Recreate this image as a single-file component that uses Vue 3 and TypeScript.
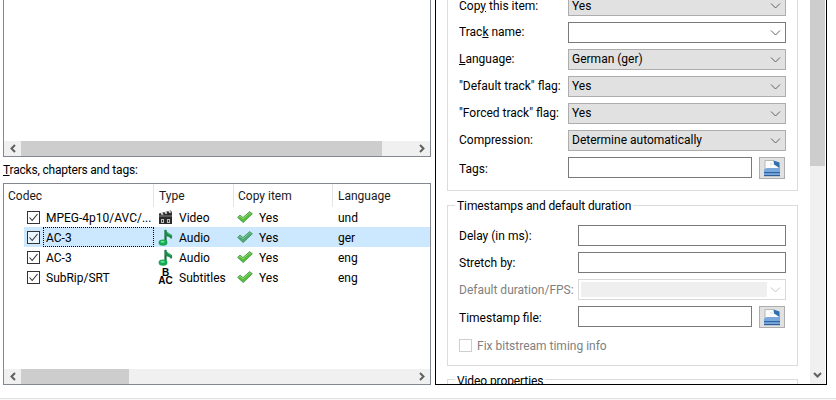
<script setup lang="ts">
interface Track {
  codec: string
  type: string
  icon: 'video' | 'audio' | 'subs'
  lang: string
  selected?: boolean
}

const tracks: Track[] = [
  { codec: 'MPEG-4p10/AVC/...', type: 'Video', icon: 'video', lang: 'und' },
  { codec: 'AC-3', type: 'Audio', icon: 'audio', lang: 'ger', selected: true },
  { codec: 'AC-3', type: 'Audio', icon: 'audio', lang: 'eng' },
  { codec: 'SubRip/SRT', type: 'Subtitles', icon: 'subs', lang: 'eng' },
]
</script>

<template>
  <div class="root">
    <div class="main">
      <div class="left">
        <div class="list list-top">
          <div class="list-fill"></div>
          <div class="hbar">
            <svg class="arrow" width="17" height="15" viewBox="0 0 17 15"><path d="M11 4 7.5 7.5 11 11" fill="none" stroke="#606060" stroke-width="2" /></svg>
            <div class="thumb thumb-long"></div>
            <svg class="arrow arrow-end" width="17" height="15" viewBox="0 0 17 15"><path d="M7 4 10.5 7.5 7 11" fill="none" stroke="#606060" stroke-width="2" /></svg>
          </div>
        </div>
        <div class="list-label"><u>T</u>racks, chapters and tags:</div>
        <div class="list list-bottom">
          <div class="thead">
            <div class="th c-codec">Codec</div>
            <div class="th c-type">Type</div>
            <div class="th c-copy">Copy item</div>
            <div class="th c-lang">Language</div>
          </div>
          <div class="tbody">
            <div v-for="t in tracks" :key="t.codec + t.lang" class="tr">
              <div class="tr-inner" :class="{ sel: t.selected }">
                <div class="td c-codec codec-cell">
                  <span class="check">
                    <svg width="11" height="11" viewBox="0 0 11 11"><path d="M1.5 5.5 4.2 8.5 9.5 2" fill="none" stroke="#333" stroke-width="1.1" /></svg>
                  </span>
                  <span class="codec-text" :class="{ focus: t.selected }">{{ t.codec }}</span>
                </div>
                <div class="td c-type type-cell">
                  <svg v-if="t.icon === 'video'" class="ticon" width="15" height="15" viewBox="0 0 15 15">
                    <path d="M1 3.6 13 .4 14 3 14 14 1 14Z" fill="#2b2b2b" />
                    <path d="M2.6 3.2 4.4 2.7 5.6 4.4 3.8 4.9ZM6.4 2.2 8.2 1.7 9.4 3.4 7.6 3.9ZM10.2 1.2 12 .7 13.2 2.4 11.4 2.9Z" fill="#e6e6e6" />
                    <rect x="1" y="5.5" width="13" height="1" fill="#8a8a8a" />
                    <rect x="3" y="9" width="3" height="4" fill="#bdbdbd" />
                    <rect x="9" y="9" width="3" height="4" fill="#bdbdbd" />
                    <rect x="4" y="10" width="1" height="2" fill="#2b2b2b" />
                    <rect x="10" y="10" width="1" height="2" fill="#2b2b2b" />
                  </svg>
                  <svg v-else-if="t.icon === 'audio'" class="ticon" width="15" height="17" viewBox="0 0 15 17">
                    <path d="M7.5 1V14" fill="none" stroke="#156f3c" stroke-width="2.2" />
                    <path d="M7 0C8 3 11 4 13.6 5.8 14.8 7.4 14 9.4 13 10.2 12.4 8.2 10.6 7.6 7 7Z" fill="#1d8a4c" />
                    <path d="M9 3.4C10.4 4.6 12 5.2 13 6.4" fill="none" stroke="#63d092" stroke-width=".8" />
                    <ellipse cx="5" cy="13.6" rx="4.4" ry="3.2" fill="#17a855" />
                    <ellipse cx="4.6" cy="12.8" rx="2.2" ry="1.1" fill="#5fe08f" />
                  </svg>
                  <span v-else class="ticon subs"><b class="subs-b">B</b><b class="subs-ac">AC</b></span>
                  <span class="type-text">{{ t.type }}</span>
                </div>
                <div class="td c-copy copy-cell">
                  <svg class="ok" width="16" height="12" viewBox="0 0 16 12">
                    <path d="M.6 6.4 3 4 6 6.6 12.6 .6 15.4 2.8 6.2 11.6Z" :fill="t.selected ? '#4fa878' : '#58bd38'" stroke="#3d9650" stroke-width=".8" />
                    <path d="M1.8 6.4 3 5.2 6 7.8 12.6 1.8 13.6 2.6" fill="none" :stroke="t.selected ? '#8fd0ac' : '#9fe07f'" stroke-width=".8" />
                  </svg>
                  <span class="yes">Yes</span>
                </div>
                <div class="td c-lang">{{ t.lang }}</div>
              </div>
            </div>
          </div>
          <div class="hbar">
            <svg class="arrow" width="17" height="15" viewBox="0 0 17 15"><path d="M11 4 7.5 7.5 11 11" fill="none" stroke="#606060" stroke-width="2" /></svg>
            <div class="thumb thumb-short"></div>
            <svg class="arrow arrow-end" width="17" height="15" viewBox="0 0 17 15"><path d="M7 4 10.5 7.5 7 11" fill="none" stroke="#606060" stroke-width="2" /></svg>
          </div>
        </div>
      </div>

      <div class="pane">
        <div class="pane-content">
          <div class="group group-one">
            <div class="form form-one">
              <label class="label-mid">Cop<u>y</u> this item:</label>
              <div class="combo combo-first"><span>Yes</span><svg class="chev" width="11" height="6" viewBox="0 0 11 6"><path d="M1 .5 5.5 5 10 .5" fill="none" stroke="#606060" /></svg></div>
              <label>Trac<u>k</u> name:</label>
              <div class="combo combo-edit"><span></span><svg class="chev" width="11" height="6" viewBox="0 0 11 6"><path d="M1 .5 5.5 5 10 .5" fill="none" stroke="#606060" /></svg></div>
              <label><u>L</u>anguage:</label>
              <div class="combo"><span>German (ger)</span><svg class="chev" width="11" height="6" viewBox="0 0 11 6"><path d="M1 .5 5.5 5 10 .5" fill="none" stroke="#606060" /></svg></div>
              <label>"Default track" flag:</label>
              <div class="combo"><span>Yes</span><svg class="chev" width="11" height="6" viewBox="0 0 11 6"><path d="M1 .5 5.5 5 10 .5" fill="none" stroke="#606060" /></svg></div>
              <label>"Forced track" flag:</label>
              <div class="combo"><span>Yes</span><svg class="chev" width="11" height="6" viewBox="0 0 11 6"><path d="M1 .5 5.5 5 10 .5" fill="none" stroke="#606060" /></svg></div>
              <label>Compression:</label>
              <div class="combo"><span>Determine automatically</span><svg class="chev" width="11" height="6" viewBox="0 0 11 6"><path d="M1 .5 5.5 5 10 .5" fill="none" stroke="#606060" /></svg></div>
              <label class="label-low">Tags:</label>
              <div class="with-btn">
                <div class="input"></div>
                <button class="file-btn" type="button">
                  <svg width="18" height="17" viewBox="0 0 18 17"><path d="M2 9V.5H10.5L12 2 16 5V9Z" fill="#fbfbfb" stroke="#a9a9a9" stroke-width=".8" /><path d="M10.5 .5 16.5 2.5V8L11 4.5Z" fill="#2f6fb0" /><path d="M11 4.6 7 3 7 4.6Z" fill="#d9d9d9" /><path d="M1 9.5 4 8H17V16H1Z" fill="#7aa8da" /><rect x="1" y="12" width="16" height="1.2" fill="#2e66a5" /><rect x="1" y="15" width="16" height="1.2" fill="#2e5d96" /></svg>
                </button>
              </div>
            </div>
          </div>

          <div class="group group-two">
            <span class="legend">Timestamps and default duration</span>
            <div class="form form-two">
              <label class="label-mid">Delay (in ms):</label>
              <div class="input"></div>
              <label class="label-mid">Stretch by:</label>
              <div class="input"></div>
              <label class="dim label-mid">Default duration/FPS:</label>
              <div class="combo combo-off"><span class="off-fill"></span><svg class="chev" width="11" height="6" viewBox="0 0 11 6"><path d="M1 .5 5.5 5 10 .5" fill="none" stroke="#c4c4c4" /></svg></div>
              <label class="label-low">Timestamp file:</label>
              <div class="with-btn">
                <div class="input"></div>
                <button class="file-btn" type="button">
                  <svg width="18" height="17" viewBox="0 0 18 17"><path d="M2 9V.5H10.5L12 2 16 5V9Z" fill="#fbfbfb" stroke="#a9a9a9" stroke-width=".8" /><path d="M10.5 .5 16.5 2.5V8L11 4.5Z" fill="#2f6fb0" /><path d="M11 4.6 7 3 7 4.6Z" fill="#d9d9d9" /><path d="M1 9.5 4 8H17V16H1Z" fill="#7aa8da" /><rect x="1" y="12" width="16" height="1.2" fill="#2e66a5" /><rect x="1" y="15" width="16" height="1.2" fill="#2e5d96" /></svg>
                </button>
              </div>
            </div>
            <div class="fix-row">
              <span class="check check-off"></span>
              <span class="dim">Fix bitstream timing info</span>
            </div>
          </div>

          <div class="group group-three">
            <span class="legend legend-low">Video properties</span>
          </div>
        </div>
        <div class="vbar">
          <div class="vthumb"></div>
          <div class="vspace"></div>
          <svg class="varrow" width="15" height="18" viewBox="0 0 15 18"><path d="M4 7 7.5 10.5 11 7" fill="none" stroke="#606060" stroke-width="2" /></svg>
        </div>
      </div>
    </div>
    <div class="footer"></div>
  </div>
</template>

<style>
html, body { margin: 0; background: #fff; }
</style>

<style scoped>
.root {
  width: 836px;
  height: 400px;
  overflow: hidden;
  display: flex;
  flex-direction: column;
  background: #fff;
  color: #000;
  font-family: Roboto, "Noto Sans", sans-serif;
  font-size: 12px;
  line-height: 16px;
}
.main { display: flex; height: 385px; flex: none; overflow: hidden; }
.left { width: 428px; margin-left: 3px; flex: none; display: flex; flex-direction: column; }
.list { border: 1px solid #828790; box-sizing: border-box; display: flex; flex-direction: column; background: #fff; }
.list-top { height: 160px; margin-top: -3px; flex: none; }
.list-fill { flex: 1; }
.list-label { height: 26px; line-height: 27px; flex: none; white-space: pre; letter-spacing: -.2px; }
.list-bottom { flex: 1; min-height: 0; }
.hbar { height: 15px; flex: none; background: #f0f0f0; display: flex; }
.arrow { flex: none; }
.arrow-end { margin-left: auto; }
.thumb { background: #cdcdcd; height: 15px; }
.thumb-long { width: 361px; }
.thumb-short { width: 108px; }
.thead { display: flex; height: 23px; flex: none; }
.th { height: 23px; line-height: 24px; box-sizing: border-box; border-right: 1px solid #e5e5e5; padding-left: 4px; color: #1a1a1a; }
.c-codec { width: 150px; flex: none; }
.c-type { width: 80px; flex: none; }
.c-copy { width: 99px; flex: none; }
.c-lang { flex: 1; border-right: 0; }
.th.c-type { padding-left: 5px; }
.th.c-copy { padding-left: 4px; }
.th.c-lang { padding-left: 5px; }
.tbody { flex: 1; min-height: 0; }
.tr { height: 20px; }
.tr-inner { display: flex; height: 20px; align-items: center; }
.tr-inner.sel { background: linear-gradient(to right, transparent 20px, #cce8ff 20px); }
.td { height: 20px; display: flex; align-items: center; box-sizing: border-box; }
.codec-cell { padding-left: 23px; }
.check { width: 13px; height: 13px; box-sizing: border-box; border: 1px solid #333; display: flex; align-items: center; justify-content: center; flex: none; background: #fff; }
.tr-inner.sel .check { background: #e9f5ff; }
.codec-text { margin-left: 3px; padding-left: 3px; flex: 1; height: 20px; line-height: 22px; box-sizing: border-box; white-space: nowrap; overflow: hidden; }
.codec-text.focus { outline: 1px dotted #000; outline-offset: -1px; }
.c-type.type-cell { padding-left: 4px; }
.ticon { flex: none; width: 15px; }
.type-text { margin-left: 6px; margin-top: 2px; }
.subs { display: flex; flex-direction: column; align-items: center; font-size: 10px; line-height: 8px; height: 16px; font-family: "Liberation Sans", sans-serif; }
.subs-b { height: 8px; }
.subs-ac { height: 8px; }
.copy-cell { padding-left: 3px; }
.ok { flex: none; }
.yes { margin-left: 6px; margin-top: 2px; }
.c-lang.td { padding-left: 5px; padding-top: 2px; }

.pane {
  width: 392px;
  height: 386px;
  margin-left: 4px;
  margin-top: -1px;
  flex: none;
  box-sizing: border-box;
  border: 1px solid #000;
  display: flex;
  background: #fff;
  overflow: hidden;
}
.pane-content { width: 374px; flex: none; overflow: hidden; }
.group { margin-left: 11px; width: 351px; box-sizing: border-box; border: 1px solid #dcdcdc; position: relative; }
.group-one { margin-top: -30px; padding: 24px 10px 12px 11px; }
.group-two { margin-top: 14px; padding: 19px 10px 9px 11px; }
.group-three { margin-top: 13px; height: 60px; }
.legend { position: absolute; left: 7px; top: -8px; padding: 0 2px; background: #fff; white-space: nowrap; letter-spacing: -.1px; }
.legend-low { top: -7px; }
.form { display: grid; row-gap: 6px; grid-auto-rows: 21px; align-items: center; }
.form-one { grid-template-columns: 109px 218px; }
.form-two { grid-template-columns: 119px 208px; }
label { white-space: nowrap; line-height: 16px; margin-bottom: 2px; }
label.label-mid { margin-bottom: 0; }
label.label-low { margin-bottom: 0; margin-top: 2px; }
.combo { height: 21px; box-sizing: border-box; border: 1px solid #adadad; background: #e1e1e1; display: flex; align-items: center; padding-left: 3px; justify-content: space-between; }
.combo > span { margin-bottom: 2px; }
.combo.combo-first > span { margin-bottom: 0; }
.combo-edit { background: #fff; border-color: #7a7a7a; }
.combo-off { background: #fff; border-color: #d9d9d9; padding-left: 2px; }
.combo > .off-fill { display: block; width: 186px; height: 15px; margin: 0; background: #efefef; }
.chev { margin-right: 4px; flex: none; }
.input { height: 21px; box-sizing: border-box; border: 1px solid #7a7a7a; background: #fff; flex: 1; }
.with-btn { display: flex; gap: 7px; height: 21px; }
.file-btn { width: 26px; height: 22px; box-sizing: border-box; padding: 0; margin: 0 1px 0 0; background: #e1e1e1; border: 1px solid #adadad; display: flex; align-items: center; justify-content: center; flex: none; }
.dim { color: #7f7f7f; }
.fix-row { display: flex; align-items: center; height: 21px; margin-top: 8px; }
.check-off { border-color: #cfcfcf; background: #fff; }
.fix-row .dim { margin-left: 5px; }
.vbar { width: 15px; flex: none; background: #f0f0f0; display: flex; flex-direction: column; }
.vthumb { height: 166px; background: #cdcdcd; flex: none; }
.vspace { flex: 1; }
.varrow { flex: none; }
.footer { margin-top: 13px; flex: 1; background: #f8f8f8; border-top: 1px solid #e3e3e3; }
</style>
